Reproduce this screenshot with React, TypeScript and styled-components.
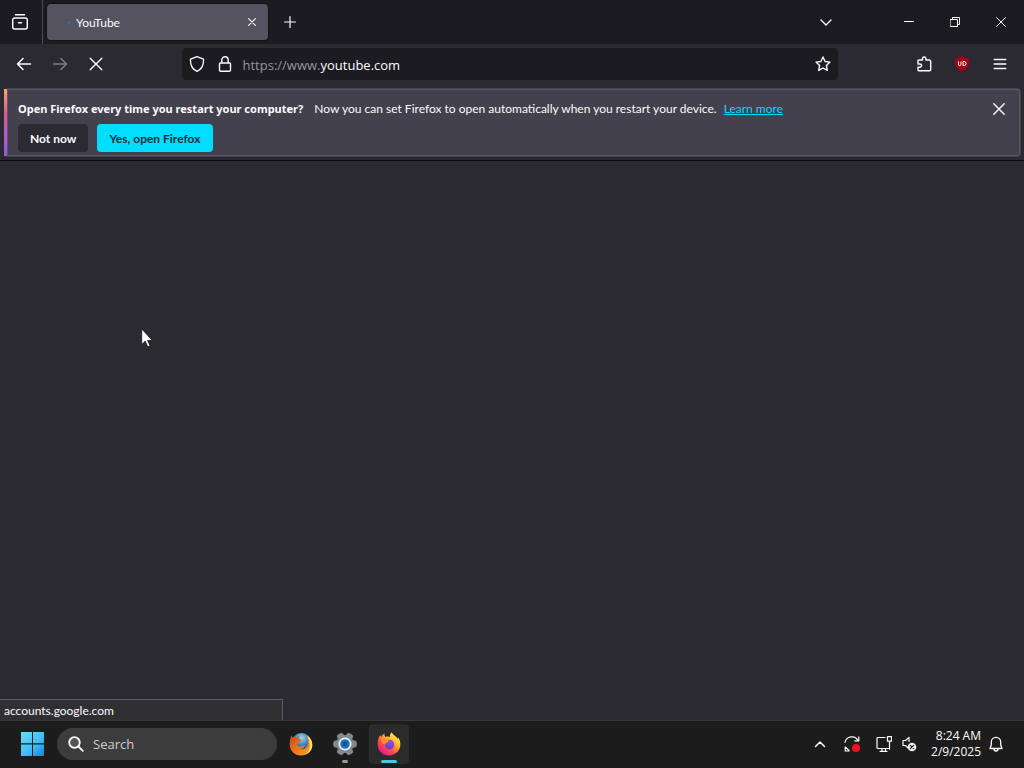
import React from "react";
import styled, { createGlobalStyle, css } from "styled-components";

const GlobalStyle = createGlobalStyle`
  * { box-sizing: border-box; }
  body {
    margin: 0;
    background: #2b2a30;
    color: #fbfbfe;
    font-family: "Lato", "Open Sans", sans-serif;
    font-size: 12px;
    line-height: 16px;
  }
  button, input { font: inherit; color: inherit; border: 0; margin: 0; padding: 0; }
  button { background: transparent; cursor: default; }
  svg { display: block; flex: none; }
`;

const Desktop = styled.div`
  position: relative;
  display: flex;
  flex-direction: column;
  min-height: 100vh;
`;

const TitleBar = styled.header`
  display: flex;
  align-items: center;
  height: 44px;
  background: #1c1b20;
`;

const IconButton = styled.button<{ $width?: number; $dim?: boolean }>`
  display: flex;
  align-items: center;
  justify-content: center;
  flex: none;
  width: ${(p) => p.$width ?? 36}px;
  height: 32px;
  opacity: ${(p) => (p.$dim ? 0.4 : 1)};
`;

const FirefoxView = styled.div`
  display: flex;
  align-items: center;
  height: 44px;
  padding: 0 2px 0 0;
  border-right: 1px solid #4a4950;
  margin-right: 4px;
`;

const Tab = styled.div`
  display: flex;
  align-items: center;
  width: 221px;
  height: 36px;
  padding: 0 4px 0 20px;
  border-radius: 4px;
  background: #55535f;
  box-shadow: 0 0 2px #000;
`;

const LoadingDot = styled.span`
  width: 3px;
  height: 3px;
  border-radius: 50%;
  background: #2f72b4;
  margin-right: 6px;
`;

const TabTitle = styled.span`
  flex: 1;
  padding-top: 1px;
`;

const WindowControls = styled.div`
  display: flex;
  margin-left: auto;
`;

const NavBar = styled.nav`
  display: flex;
  align-items: center;
  height: 44px;
  padding: 0 6px 4px;
  background: #2b2a33;
`;

const NavGroup = styled.div<{ $end?: boolean }>`
  display: flex;
  flex: 1 1 0;
  justify-content: ${(p) => (p.$end ? "flex-end" : "flex-start")};
  gap: ${(p) => (p.$end ? 2 : 0)}px;
`;

const UrlBar = styled.form`
  display: flex;
  align-items: center;
  flex: 0 1 656px;
  height: 32px;
  margin: 0 5px 0 0;
  padding-left: 1px;
  border-radius: 4px;
  background: #1c1b20;
`;

const Address = styled.div`
  flex: 1;
  margin-left: 4px;
  padding-top: 2px;
  font-family: "Open Sans", sans-serif;
  font-size: 13px;
  line-height: 20px;
  color: #96959d;

  strong { font-weight: 400; color: #fbfbfe; }
`;

const Notice = styled.section`
  display: flex;
  align-items: flex-start;
  margin: 0 3px 3px 4px;
  padding: 4px 3px 4px 10px;
  border: 1px solid #5c5a68;
  border-left: 3px solid;
  border-image: linear-gradient(#ffa266, #e05a8c 35%, #b45bd0 70%, #8a5be0) 0 0 0 3;
  border-radius: 4px;
  background: #42414d;
  box-shadow: inset 0 0 0 1px #5a5866;
`;

const NoticeBody = styled.div`
  flex: 1;
  padding: 8px 0 0 1px;
`;

const NoticeText = styled.p`
  margin: 0 0 7px;
  strong {
    margin-right: 8px;
    font-family: "Noto Sans", sans-serif;
    font-size: 11px;
    font-weight: 700;
    line-height: 1;
  }
`;

const Link = styled.a`
  margin-left: 4px;
  color: #00ddff;
  text-decoration: underline;
`;

const Actions = styled.div`
  display: flex;
  gap: 9px;
`;

const ActionButton = styled.button<{ $primary?: boolean }>`
  height: 28px;
  padding: 1px 12px 0;
  border-radius: 4px;
  font-weight: 700;
  ${(p) =>
    p.$primary
      ? css`background: #00ddff; color: #2b2a33;`
      : css`background: #2b2a33; color: #fbfbfe;`}
`;

const Page = styled.main`
  display: flex;
  flex: 1;
  align-items: flex-end;
  border-top: 1px solid #0c0c0d;
  background: #2b2a30;
`;

const StatusPanel = styled.output`
  width: 283px;
  height: 21px;
  padding: 3px 4px 0;
  border: 1px solid #5b5b66;
  border-width: 1px 1px 0 0;
  background: #303032;
`;

const Taskbar = styled.footer`
  display: flex;
  align-items: center;
  height: 48px;
  padding: 0 20px;
  box-shadow: inset 0 1px #37363b;
  background: #1c1c1c;
`;

const StartButton = styled.button`
  margin-right: 13px;
`;

const SearchBox = styled.label`
  display: flex;
  align-items: center;
  gap: 9px;
  width: 220px;
  height: 32px;
  padding: 0 11px;
  border-radius: 16px;
  background: #3c3c3c;
  margin-right: 4px;
  font-family: "Open Sans", sans-serif;

  input {
    min-width: 0;
    flex: 1;
    background: transparent;
    font-size: 13px;
    outline: 0;
  }
  input::placeholder { color: #cfcfcf; opacity: 1; }
`;

const AppButton = styled.button<{ $active?: boolean; $running?: boolean }>`
  display: flex;
  flex-direction: column;
  align-items: center;
  justify-content: flex-end;
  gap: 4px;
  width: 40px;
  height: 40px;
  margin-right: 4px;
  border-radius: 4px;
  background: ${(p) => (p.$active ? "#2b2b2b" : "transparent")};

  &::after {
    content: "";
    width: ${(p) => (p.$active ? 16 : 6)}px;
    height: 3px;
    margin-bottom: 1px;
    border-radius: 2px;
    background: ${(p) => (p.$active ? "#4cc2e8" : p.$running ? "#9a9a9a" : "transparent")};
  }
`;

const Tray = styled.div`
  display: flex;
  align-items: center;
  margin-left: auto;
`;

const TrayButton = styled.button<{ $gap: number }>`
  margin-right: ${(p) => p.$gap}px;
`;

const Clock = styled.time`
  margin-right: 7px;
  text-align: right;
  font-family: "Open Sans", sans-serif;
`;

const Pointer = styled.svg`
  position: absolute;
  left: 141px;
  top: 328px;
`;

const Stroke = ({ d, size = 16, w = 1.3, children }: { d?: string; size?: number; w?: number; children?: React.ReactNode }) => (
  <svg width={size} height={size} viewBox={`0 0 ${size} ${size}`} fill="none" stroke="currentColor" strokeWidth={w} strokeLinecap="round" strokeLinejoin="round" aria-hidden="true">
    {d && <path d={d} />}
    {children}
  </svg>
);

const ClassicFirefox = () => (
  <svg width="24" height="24" viewBox="0 0 24 24" aria-hidden="true">
    <defs>
      <radialGradient id="globe" cx=".5" cy=".25" r=".7">
        <stop offset="0" stopColor="#9bd6f2" />
        <stop offset=".5" stopColor="#3b86c0" />
        <stop offset="1" stopColor="#153a72" />
      </radialGradient>
      <linearGradient id="fox" x1="0" y1="0" x2="1" y2="1">
        <stop offset="0" stopColor="#c8481a" />
        <stop offset=".55" stopColor="#ee7a1c" />
        <stop offset="1" stopColor="#f9b52c" />
      </linearGradient>
    </defs>
    <circle cx="12.5" cy="11" r="10" fill="url(#globe)" />
    <path d="M2.300 3.200c.3 1 .8 1.800 1.500 2.200 1.200-.5 2.500-.5 3.700 0 .8-.9 1.900-1.500 3-1.500-.7.8-1.100 1.600-1 2.500.6.600 2.200.6 2.900 1-.1 1.200-1.500 1.700-2.400 2.400.1.800.2 1.500-.2 2.100-.8-.3-1.700-.2-2.200.4.700 1.700 2.500 2.500 4.400 2.100 1.500-.3 2.600-1.300 4-.9-.8 2.400-3 3.600-5.300 3.600 4.600 1.100 7.600-1.600 8.200-5.200.4-2.700-.1-5-1.400-7.900 4 2 5.800 5 5.800 9C23.300 19 18.300 23.500 12 23.500S.7 18.600.7 12.500c0-3 .5-6 1.600-9.300Z" fill="url(#fox)" />
    <path d="M18 3.500c3.500 2.200 5.300 5.600 5.300 9.600 0 4-2.400 7.500-6 9.300 2.700-3 4-6.500 3.400-10.300-.3-2.900-1.200-5.700-2.700-8.600Z" fill="#ffe36b" />
  </svg>
);

const SettingsGear = () => (
  <svg width="24" height="24" viewBox="0 0 24 24" aria-hidden="true">
    <g fill="#85898d">
      <circle cx="12" cy="12" r="9" />
      {[0, 60, 120, 180, 240, 300].map((a) => (
        <path key={a} transform={`rotate(${a + 30} 12 12)`} d="M8 5 9 .7Q12-.3 15 .7L16 5Z" />
      ))}
    </g>
    <circle cx="12" cy="12" r="6.500" fill="#eef6fb" />
    <circle cx="12" cy="12" r="4.800" fill="#1b74c0" />
    <circle cx="12" cy="12" r="2.200" fill="#0c4f92" />
  </svg>
);

const ModernFirefox = () => (
  <svg width="24" height="24" viewBox="0 0 24 24" aria-hidden="true">
    <defs>
      <linearGradient id="flame" x1=".85" y1=".1" x2=".2" y2=".95">
        <stop offset="0" stopColor="#fff44f" />
        <stop offset=".35" stopColor="#ffb02a" />
        <stop offset=".65" stopColor="#ff4b4b" />
        <stop offset="1" stopColor="#e3148b" />
      </linearGradient>
      <linearGradient id="orb" x1="0" y1="0" x2="0" y2="1">
        <stop offset="0" stopColor="#a04fd8" />
        <stop offset="1" stopColor="#6040c8" />
      </linearGradient>
    </defs>
    <path d="M14.500.2c-1.300 1.500-1.700 3-1.600 4.800-1.200-.5-2.900-.8-4.400-.1C7.600 4.200 7.300 3 7.500 1.800 6 2.500 5 3.600 4.300 5c-.6-.5-.8-1.200-.8-2C1.500 5.200.6 8.500.6 12.200.6 18.600 5.600 23.500 12 23.500s11.400-5 11.400-11.200c0-3.200-1.100-5.500-2.600-7.100.1.700.1 1.300-.1 1.900-1-2.900-4.600-4-6.200-6.900Z" fill="url(#flame)" />
    <circle cx="12.500" cy="12.500" r="4.800" fill="url(#orb)" />
    <path d="M4.500 7.500c1.700-.6 3-.2 4 .5 1.300-.4 2.500.1 3.300 1.200-.2 1-1.700 1.100-2.900 1.600-.6.4-.4 1.300-1.400 1.700C5.500 12 4 10 4.500 7.500Z" fill="#ff912b" />
  </svg>
);

export default function App() {
  return (
    <>
      <GlobalStyle />
      <Desktop>
        <TitleBar>
          <FirefoxView>
            <IconButton $width={40} aria-label="Firefox View">
              <Stroke w={1.5} d="M3.500 .8h9M2.700 4h10.600a2 2 0 0 1 2 2v7a2 2 0 0 1-2 2H2.700a2 2 0 0 1-2-2V6a2 2 0 0 1 2-2ZM6.500 8.700h3" />
            </IconButton>
          </FirefoxView>
          <Tab>
            <LoadingDot />
            <TabTitle>YouTube</TabTitle>
            <IconButton $width={24} aria-label="Close tab">
              <Stroke size={8} w={1.1} d="M.6.6l6.800 6.800M7.400.6.6 7.400" />
            </IconButton>
          </Tab>
          <IconButton $width={44} aria-label="New tab">
            <Stroke size={12} w={1.2} d="M6 .6v10.800M.6 6h10.800" />
          </IconButton>
          <WindowControls>
            <IconButton $width={120} aria-label="List all tabs"><Stroke size={12} w={1.4} d="M1 4l5 5 5-5" /></IconButton>
            <IconButton $width={46} aria-label="Minimize"><Stroke size={10} w={1} d="M.5 4.500h9" /></IconButton>
            <IconButton $width={46} aria-label="Restore"><Stroke size={10} w={1} d="M.5 2.500h7v7h-7ZM2.500 2.300V.5h7v7H7.700" /></IconButton>
            <IconButton $width={46} aria-label="Close"><Stroke size={10} w={1} d="M.5.5l9 9M9.500.5l-9 9" /></IconButton>
          </WindowControls>
        </TitleBar>

        <NavBar>
          <NavGroup>
            <IconButton aria-label="Back"><Stroke w={1.5} d="M14.500 8H1.500M7 2.500 1.500 8 7 13.500" /></IconButton>
            <IconButton $dim aria-label="Forward"><Stroke w={1.5} d="M1.500 8h13M9 2.500 14.500 8 9 13.500" /></IconButton>
            <IconButton aria-label="Stop"><Stroke w={1.4} d="M2.200 2.200l11.600 11.600M13.800 2.200 2.200 13.800" /></IconButton>
          </NavGroup>
          <UrlBar>
            <IconButton $width={28} type="button" aria-label="Tracking protection">
              <Stroke d="M8 .7l6.500 2.500c.3 5.300-1.200 9.700-6.500 12.100C2.700 12.900 1.200 8.500 1.500 3.200Z" />
            </IconButton>
            <IconButton $width={28} type="button" aria-label="Site information">
              <Stroke w={1.4} d="M3.500 7h9a1 1 0 0 1 1 1v6a1.200 1.200 0 0 1-1.200 1.200H3.700A1.200 1.200 0 0 1 2.500 14V8a1 1 0 0 1 1-1ZM4.800 7V4a3.200 3.200 0 0 1 6.400 0v3" />
            </IconButton>
            <Address>https://www.<strong>youtube.com</strong></Address>
            <IconButton $width={30} type="button" aria-label="Bookmark this page">
              <Stroke w={1.400} d="M8 1l2.100 4.500 4.900.6-3.600 3.400.9 4.900L8 12l-4.300 2.400.9-4.900L1 6.100l4.900-.6Z" />
            </IconButton>
          </UrlBar>
          <NavGroup $end>
            <IconButton aria-label="Extensions">
              <Stroke w={1.4} d="M3 4h3.500V2.700a1.700 1.700 0 0 1 3.400 0V4h3.300a1.500 1.500 0 0 1 1.500 1.500v8.300a1 1 0 0 1-1 1H3a1 1 0 0 1-1-1v-2.600h2a1.600 1.600 0 0 0 0-3.200H2V5a1 1 0 0 1 1-1Z" />
            </IconButton>
            <IconButton aria-label="uBlock Origin">
              <svg width="16" height="16" viewBox="0 0 16 16" aria-hidden="true">
                <path d="M8 0c2.500 1.500 4 2 7 2.500 0 6.500-.5 9.500-7 13.500C1.500 12 1 9 1 2.500 4 2 5.500 1.500 8 0Z" fill="#a80014" />
                <path d="M4.500 5.500v3q0 1 1.300 1T7 8.500v-3M9 5.500v4h1q2 0 2-2t-2-2Z" fill="none" stroke="#fff" />
              </svg>
            </IconButton>
            <IconButton aria-label="Open application menu"><Stroke w={1.400} d="M2.200 3.500h11.600M2.200 8h11.600M2.200 12.500h11.600" /></IconButton>
          </NavGroup>
        </NavBar>

        <Notice>
          <NoticeBody>
            <NoticeText>
              <strong>Open Firefox every time you restart your computer?</strong> Now you can set Firefox to open automatically when you restart your device. <Link href="#">Learn more</Link>
            </NoticeText>
            <Actions>
              <ActionButton>Not now</ActionButton>
              <ActionButton $primary>Yes, open Firefox</ActionButton>
            </Actions>
          </NoticeBody>
          <IconButton aria-label="Dismiss"><Stroke size={12} w={1.400} d="M.8.8l10.400 10.400M11.200.8.8 11.200" /></IconButton>
        </Notice>

        <Page>
          <StatusPanel>accounts.google.com</StatusPanel>
        </Page>

        <Taskbar>
          <StartButton aria-label="Start">
            <svg width="24" height="24" viewBox="0 0 24 24" aria-hidden="true">
              <defs>
                <linearGradient id="win" x1="0" y1="0" x2="24" y2="24" gradientUnits="userSpaceOnUse">
                  <stop offset="0" stopColor="#6fdcfa" />
                  <stop offset=".6" stopColor="#3dbcf5" />
                  <stop offset="1" stopColor="#0d84e8" />
                </linearGradient>
              </defs>
              <path d="M1 0h11v11.300H1ZM13 0h11v11.300H13ZM1 12.500h11V24H1ZM13 12.500h11V24H13Z" fill="url(#win)" />
            </svg>
          </StartButton>
          <SearchBox>
            <Stroke w={1.800}><circle cx="6.500" cy="6.500" r="5.300" fill="#555" /><path d="M10.500 10.500l4.300 4.300" /></Stroke>
            <input type="text" placeholder="Search" aria-label="Search" />
          </SearchBox>
          <AppButton aria-label="Firefox"><ClassicFirefox /></AppButton>
          <AppButton $running aria-label="Settings"><SettingsGear /></AppButton>
          <AppButton $active aria-label="Firefox window"><ModernFirefox /></AppButton>
          <Tray>
            <TrayButton $gap={18} aria-label="Show hidden icons"><Stroke size={12} w={1.500} d="M1.500 8.500 6 4l4.500 4.500" /></TrayButton>
            <TrayButton $gap={16} aria-label="Windows Update">
              <Stroke w={1.200}>
                <path d="M1 6.500A7 7 0 0 1 14 4.500M14.800.8v4h-4M5 15H1.200v-4M1.500 11.200 5 14.500" />
                <circle cx="12" cy="12" r="4" fill="#f0121c" stroke="none" />
              </Stroke>
            </TrayButton>
            <TrayButton $gap={10} aria-label="Network">
              <Stroke w={1.200} d="M9 1.500H2a1 1 0 0 0-1 1v9a1 1 0 0 0 1 1h10.500M4 15.300h7M6 12.500v2.800M9.500 12.500v2.800M11.500.7h4v4.500h-4ZM13.500 5.200v8" />
            </TrayButton>
            <TrayButton $gap={13} aria-label="Volume muted">
              <Stroke w={1.200}>
                <path d="M6 12 3.500 9.500H1v-5h2.500L7 1.500v4" />
                <circle cx="10" cy="11" r="4.300" fill="#f4f4f4" stroke="none" />
                <path d="M8.300 9.300l3.400 3.400M11.700 9.300 8.300 12.700" stroke="#1c1c1c" />
              </Stroke>
            </TrayButton>
            <Clock dateTime="2025-02-09T08:24">8:24 AM<br />2/9/2025</Clock>
            <TrayButton $gap={0} aria-label="Notifications">
              <Stroke w={1.300} d="M2 12.500 3.300 9V6a4.700 4.700 0 0 1 9.400 0v3L14 12.500ZM6 13a2 2 0 0 0 4 0" />
            </TrayButton>
          </Tray>
        </Taskbar>
        <Pointer width="12" height="20" viewBox="0 0 12 20" aria-hidden="true">
          <path d="M.7.9v15.600l3.500-3.300 2.500 5.600 2.400-1.100-2.500-5.300h4.800Z" fill="#fff" stroke="#111" strokeWidth=".8" />
        </Pointer>
      </Desktop>
    </>
  );
}
